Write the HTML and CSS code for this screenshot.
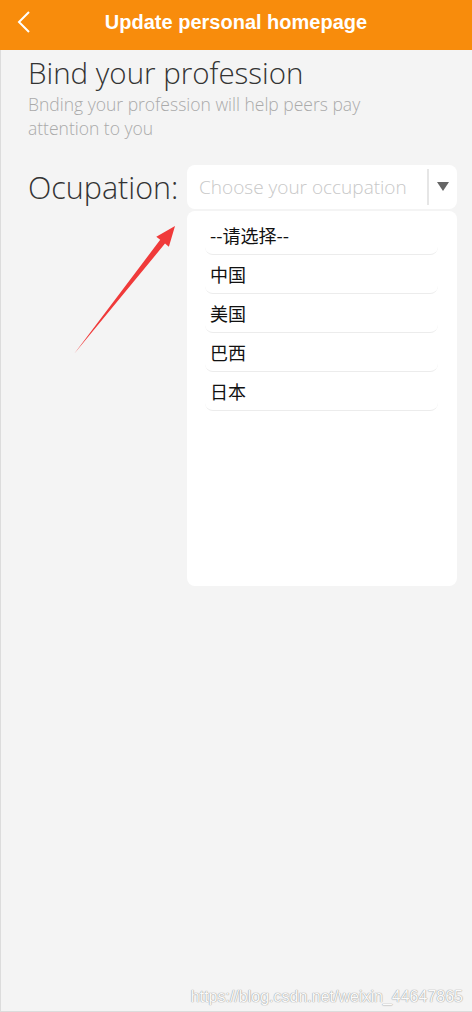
FILE: index.html
```html
<!DOCTYPE html>
<html lang="en">
<head>
    <meta charset="UTF-8">
    <meta name="viewport" content="width=device-width, initial-scale=1.0">
    <title>Update personal homepage</title>
    <link rel="stylesheet" href="styles.css">
</head>
<body>
    <div class="page">
        <header class="topbar">
            <a class="back" href="#">
                <svg width="14" height="22" viewBox="0 0 14 22">
                    <polyline points="12,1 2,11 12,21" fill="none" stroke="#fff" stroke-width="2"/>
                </svg>
            </a>
            <h1>Update personal homepage</h1>
        </header>

        <main class="content">
            <h2 class="title">Bind your profession</h2>
            <p class="hint">Bnding your profession will help peers pay attention to you</p>

            <div class="field">
                <label class="field-label">Ocupation:</label>
                <div class="picker">
                    <div class="select">
                        <span class="placeholder">Choose your occupation</span>
                        <span class="caret"></span>
                    </div>
                    <ul class="options">
                        <li>--请选择--</li>
                        <li>中国</li>
                        <li>美国</li>
                        <li>巴西</li>
                        <li>日本</li>
                    </ul>
                </div>
            </div>
        </main>

        <!-- annotation arrow -->
        <svg class="arrow" width="472" height="400" viewBox="0 0 472 400">
            <polygon points="74,354 160.2,239.8 156.3,236.7 175,226 168.9,246.7 165,243.6" fill="#f03a3a"/>
        </svg>

        <div class="watermark">https://blog.csdn.net/weixin_44647865</div>
    </div>
</body>
</html>
```

FILE: styles.css
```css
* {
    box-sizing: border-box;
}
body {
    margin: 0;
    background: #f4f4f4;
    font-family: "Open Sans", "Noto Sans CJK SC", sans-serif;
}
.page {
    position: relative;
    min-height: 1012px;
    display: flex;
    flex-direction: column;
}
.topbar {
    height: 50px;
    padding-bottom: 5px;
    background: #f88c0c;
    display: flex;
    align-items: center;
    justify-content: center;
    position: relative;
}
.topbar h1 {
    margin: 0;
    color: #fff;
    font-family: "Liberation Sans", Arial, sans-serif;
    font-weight: bold;
    font-size: 20px;
}
.back {
    position: absolute;
    left: 17px;
    top: 11px;
    display: flex;
}
.content {
    flex: 1;
    border-left: 1px solid #dcdcdc;
    border-bottom: 1px solid #dcdcdc;
    padding: 4px 15px 0 27px;
}
.title {
    margin: 0;
    font-size: 29.5px;
    font-weight: 300;
    color: #333;
    line-height: 38px;
}
.hint {
    margin: 0;
    width: 375px;
    font-size: 17.5px;
    font-weight: 300;
    color: #aaa;
    line-height: 24px;
}
.field {
    display: flex;
    margin-top: 25px;
}
.field-label {
    font-size: 30.5px;
    font-weight: 300;
    color: #333;
    line-height: 44px;
}
.picker {
    width: 270px;
    margin-left: auto;
}
.select {
    height: 44px;
    background: #fff;
    border-radius: 8px;
    display: flex;
    align-items: center;
    padding-left: 12px;
}
.placeholder {
    flex: 1;
    font-size: 19px;
    font-weight: 300;
    color: #c8c8c8;
}
.caret {
    width: 30px;
    height: 36px;
    border-left: 2px solid #e6e6e6;
    position: relative;
}
.caret::after {
    content: "";
    position: absolute;
    left: 8px;
    top: 13px;
    border-left: 6px solid transparent;
    border-right: 6px solid transparent;
    border-top: 9px solid #666;
}
.options {
    list-style: none;
    margin: 2px 0 0;
    height: 375px;
    background: #fff;
    border-radius: 8px;
    padding: 5px 19px 0 18px;
}
.options li {
    height: 39px;
    line-height: 38px;
    padding-left: 5px;
    font-family: "Noto Sans CJK SC", sans-serif;
    font-size: 18px;
    color: #111;
    border-bottom: 1px solid #ececec;
    border-radius: 0 0 8px 8px;
}
.arrow {
    position: absolute;
    left: 0;
    top: 0;
    pointer-events: none;
}
.watermark {
    position: absolute;
    right: 9px;
    bottom: 6px;
    font-family: "Liberation Sans", Arial, sans-serif;
    font-size: 16px;
    color: #fafafa;
    text-shadow: 0 0 1px #999, 0 0 1px #999;
}
```
